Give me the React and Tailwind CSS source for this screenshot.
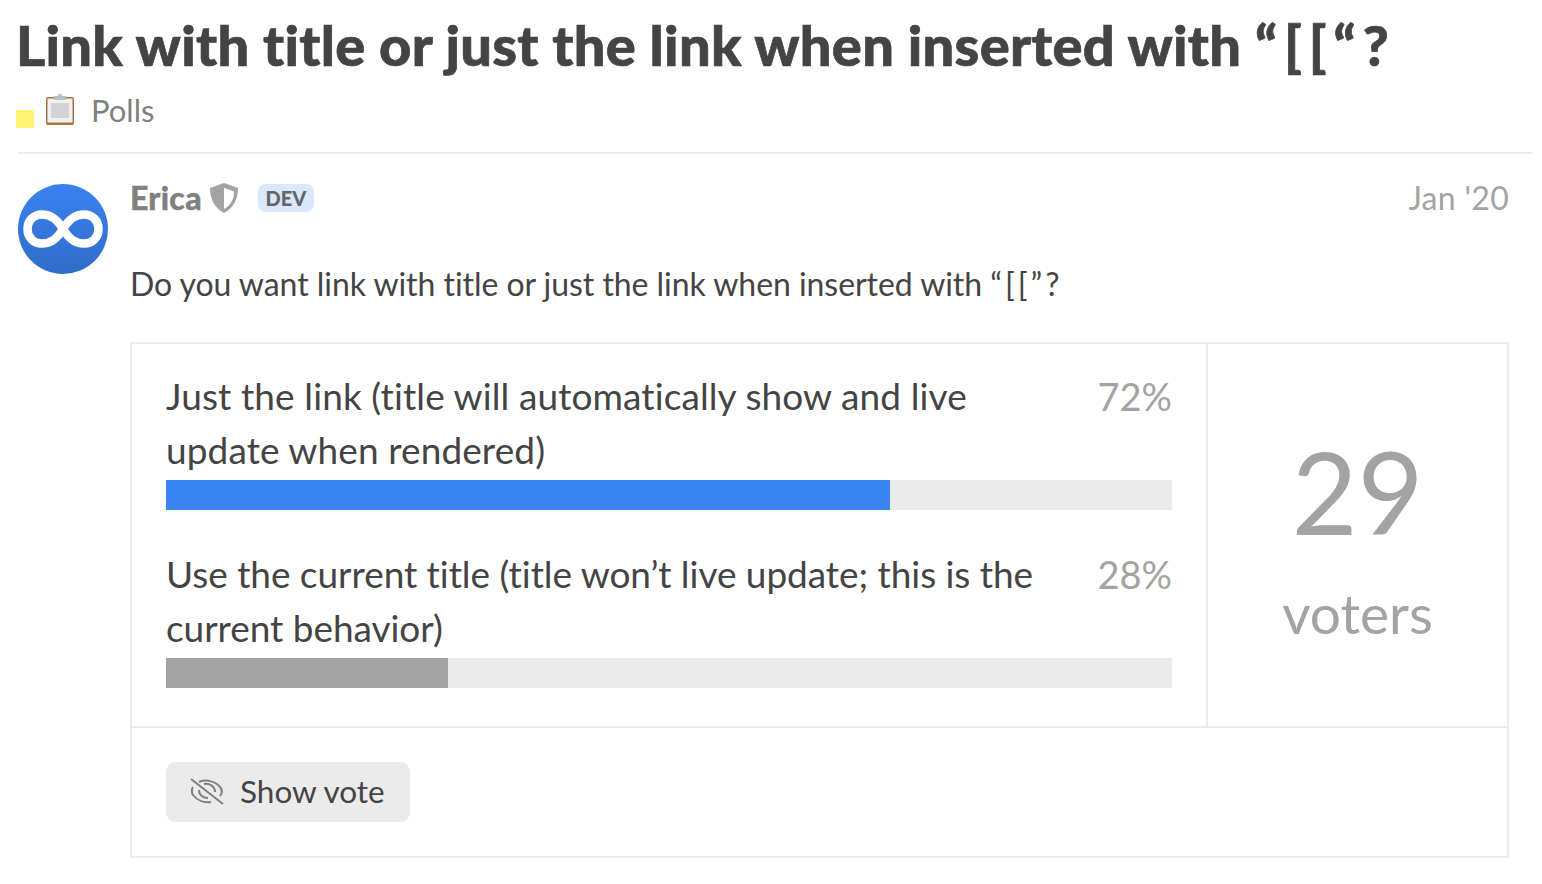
function Clipboard() {
    return (
        <svg width="30" height="32" viewBox="0 0 30 32" className="block">
            <rect x="1" y="3" width="28" height="28" rx="2" fill="#a9743a" />
            <rect x="2.500" y="4.500" width="25" height="24" fill="#f1f1f1" />
            <rect x="6" y="9" width="18" height="15" fill="#d4d4d4" />
            <rect x="9" y="2" width="12" height="4" rx="1" fill="#b9c0c4" />
            <rect x="13" y="0" width="4" height="3" rx="1" fill="#b9c0c4" />
        </svg>
    );
}

function Avatar() {
    return (
        <svg width="90" height="90" viewBox="0 0 90 90" className="block shrink-0">
            <defs>
                <linearGradient id="av" x1="0" y1="0" x2="0" y2="1">
                    <stop offset="0" stopColor="#3b82f0" />
                    <stop offset="1" stopColor="#2f6cc9" />
                </linearGradient>
            </defs>
            <circle cx="45" cy="45" r="45" fill="url(#av)" />
            <path
                d="M45 45 C39 35 33 30.500 24 30.500 C15 30.500 9.500 37 9.500 45 C9.500 53 15 59.500 24 59.500 C33 59.500 39 55 45 45 C51 35 57 30.500 66 30.500 C75 30.500 80.500 37 80.500 45 C80.500 53 75 59.500 66 59.500 C57 59.500 51 55 45 45 Z"
                fill="none"
                stroke="#fff"
                strokeWidth="8.500"
            />
        </svg>
    );
}

function Shield() {
    return (
        <svg width="28" height="30" viewBox="0 0 28 30" className="block">
            <path d="M14 0 L28 5 C28 17 23 25 14 30 C5 25 0 17 0 5 Z" fill="#a3a3a3" />
            <path d="M14 5 L24 8.500 C24 16 21 22 14 26 Z" fill="#fff" />
        </svg>
    );
}

function EyeSlash() {
    return (
        <svg width="34" height="28" viewBox="0 0 34 28" fill="none" stroke="#808080" strokeWidth="2" className="block shrink-0">
            <path d="M1 1 L33 26" />
            <path d="M3 9 C1.500 11 1.500 15 3 17 C7 22 14 25 21 24" />
            <path d="M9 4 C16 1 25 3 30 9 C32.500 12 32.500 15 30 18" />
            <path d="M9 12 C9 17 13 20 18 20" />
            <path d="M14 6 C19 5 25 8 25 14" />
        </svg>
    );
}

function PollOption({ lines, percent, barColor, barWidth, tracking }) {
    return (
        <div>
            <div className="flex justify-between items-start">
                <div className={"text-[37px] leading-[54px] text-[#444444] " + tracking}>
                    {lines.map((line, index) => (
                        <div key={index}>{line}</div>
                    ))}
                </div>
                <div className="text-[38px] leading-[54px] text-[#a3a3a3]">{percent}</div>
            </div>
            <div className="h-[30px] bg-[#ebebeb] mt-[3px]">
                <div className={"h-full " + barColor} style={{ width: barWidth }} />
            </div>
        </div>
    );
}

export default function App() {
    return (
        <div className="w-[1542px] h-[884px] overflow-hidden bg-white font-['Lato',sans-serif] [font-variant-ligatures:none] pl-[18px] pr-[10px] relative">
            <h1 className="text-[56px] leading-[68px] font-black text-[#444444] tracking-[0.27px] [-webkit-text-stroke:0.7px_#444444] pt-[11px] -ml-[2px] whitespace-nowrap">
                Link with title or just the link when inserted with <span className="tracking-[7px]">“[[“?</span>
            </h1>
            <div className="flex items-center h-[40px] mt-[11px] mb-[1px] pl-[27px] gap-[16px]">
                <Clipboard />
                <span className="text-[31px] text-[#808080]">Polls</span>
            </div>
            <div className="absolute left-[16px] top-[110px] w-[18px] h-[18px] bg-[#fff275]" />
            <div className="border-t-2 border-[#ebebeb] mt-[22px] flex pt-[30px]">
                <Avatar />
                <div className="ml-[22px] flex-1 mr-[23px]">
                    <div className="flex items-center h-[30px] -mt-[1px]">
                        <span className="text-[32px] font-black tracking-[0.3px] text-[#808080] [-webkit-text-stroke:0.4px_#808080] leading-[30px]">Erica</span>
                        <span className="ml-[8px]"><Shield /></span>
                        <span className="ml-[20px] bg-[#d9e8fb] text-[#666666] text-[20px] font-black rounded-[8px] h-[28px] w-[56px] justify-center flex items-center">DEV</span>
                        <span className="ml-auto text-[32px] tracking-[0.3px] text-[#a3a3a3]">Jan '20</span>
                    </div>
                    <p className="text-[32px] leading-[44px] tracking-[-0.05px] text-[#444444] mt-[49px]">
                        Do you want link with title or just the link when inserted with <span className="tracking-[3px]">“[[”?</span>
                    </p>
                    <div className="border-2 border-[#ebebeb] mt-[36px] h-[516px] flex flex-col">
                        <div className="flex h-[384px] border-b-2 border-[#ebebeb]">
                            <div className="w-[1074px] px-[34px] pt-[25px] flex flex-col gap-[37px]">
                                <PollOption
                                    lines={["Just the link (title will automatically show and live", "update when rendered)"]}
                                    percent="72%"
                                    barColor="bg-[#3b84f3]"
                                    barWidth="72%"
                                    tracking="tracking-[0.1px]"
                                />
                                <PollOption
                                    lines={["Use the current title (title won’t live update; this is the", "current behavior)"]}
                                    percent="28%"
                                    barColor="bg-[#a3a3a3]"
                                    barWidth="28%"
                                    tracking="tracking-[-0.05px]"
                                />
                            </div>
                            <div className="flex-1 border-l-2 border-[#ebebeb] flex flex-col items-center text-[#a3a3a3] pt-[77px]">
                                <div className="text-[114px] leading-[140px] font-normal">29</div>
                                <div className="text-[55px] leading-[64px] mt-[20px]">voters</div>
                            </div>
                        </div>
                        <div className="pl-[34px] pt-[34px]">
                            <button className="flex items-center h-[60px] w-[244px] bg-[#ebebeb] rounded-[10px] pl-[24px] gap-[16px] text-[31.5px] text-[#444444]">
                                <EyeSlash />
                                Show vote
                            </button>
                        </div>
                    </div>
                </div>
            </div>
        </div>
    );
}
